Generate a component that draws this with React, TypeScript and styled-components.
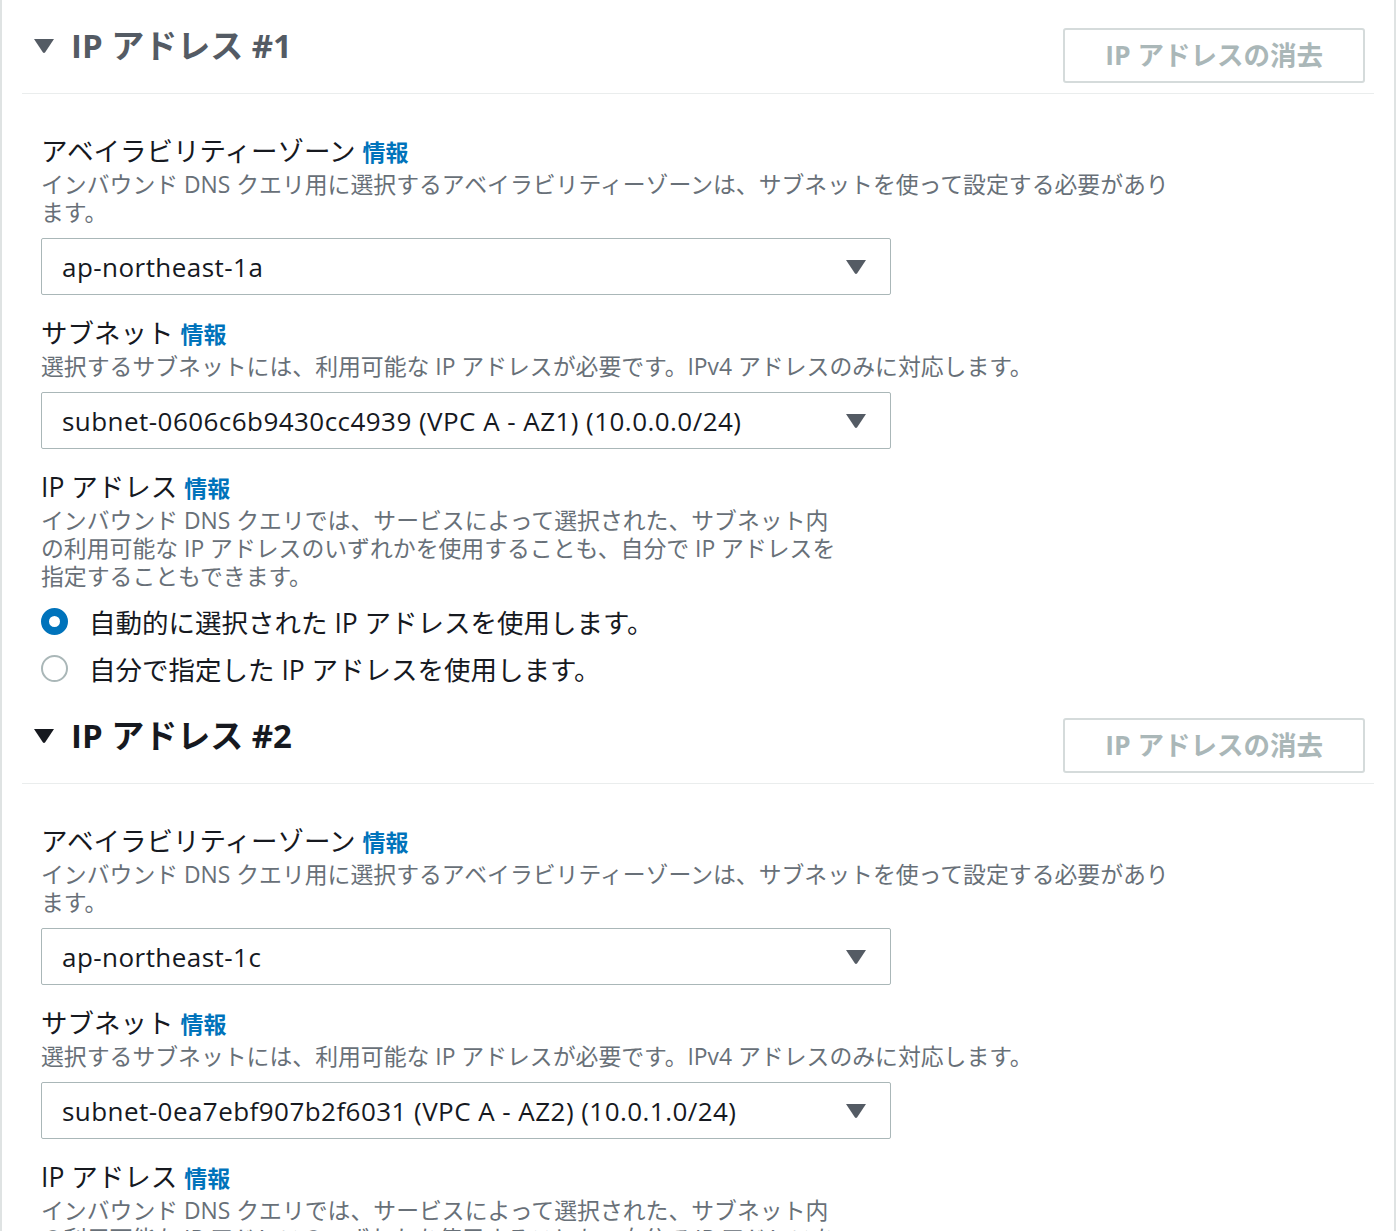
import styled, { createGlobalStyle } from "styled-components";

const GlobalStyle = createGlobalStyle`
    html, body {
        margin: 0;
        padding: 0;
        background: #ffffff;
        overflow: hidden;
    }
    body {
        font-family: "Open Sans", "Noto Sans CJK JP", sans-serif;
        color: #16191f;
    }
`;

const Page = styled.div`
    width: 1396px;
    min-height: 100vh;
    box-sizing: border-box;
    border-left: 2px solid #dfe3e3;
    border-right: 2px solid #dfe3e3;
`;

const Header = styled.div`
    margin: 0 20px;
    padding: 28px 9px 10px 12px;
    display: flex;
    align-items: flex-start;
    justify-content: space-between;
    border-bottom: 1px solid #eaeded;
`;

const Title = styled.h2<{ $muted?: boolean }>`
    margin: 0;
    display: flex;
    align-items: center;
    gap: 17px;
    height: 36px;
    font-size: 33px;
    font-weight: 700;
    line-height: 36px;
    white-space: nowrap;
    color: ${(p) => (p.$muted ? "#545b64" : "#16191f")};

    svg {
        fill: currentColor;
        flex-shrink: 0;
    }
`;

const ClearButton = styled.button`
    height: 55px;
    padding: 0 40px;
    background: #ffffff;
    border: 2px solid #d5dbdb;
    border-radius: 3px;
    font-family: inherit;
    font-size: 26.5px;
    font-weight: 700;
    line-height: 1;
    color: #aab7b8;
    cursor: default;
`;

const Body = styled.div`
    padding: 39px 0 4px 39px;
`;

const Field = styled.div`
    & + & {
        margin-top: 20px;
    }
`;

const Label = styled.div`
    display: flex;
    align-items: baseline;
    height: 36px;
    font-size: 26.5px;
    line-height: 36px;
    margin-bottom: 2px;
    color: #16191f;
`;

const Info = styled.span`
    margin-left: 7px;
    font-size: 23px;
    font-weight: 700;
    color: #0073bb;
`;

const Description = styled.div`
    font-size: 22.85px;
    line-height: 28px;
    color: #687078;
    white-space: pre-line;
`;

const Select = styled.div`
    margin-top: 11px;
    width: 850px;
    height: 57px;
    box-sizing: border-box;
    border: 1px solid #aab7b8;
    border-radius: 2px;
    padding: 0 24px 0 20px;
    display: flex;
    align-items: center;
    justify-content: space-between;
    font-size: 26px;
    letter-spacing: 0.45px;
    color: #16191f;

    svg {
        fill: #545b64;
    }
`;

const RadioGroup = styled.div`
    margin-top: 12px;
    display: flex;
    flex-direction: column;
    gap: 11px;
`;

const RadioRow = styled.label`
    display: flex;
    align-items: center;
    gap: 21px;
    height: 36px;
    font-size: 26.5px;
    color: #16191f;
`;

const RadioCircle = styled.span<{ $checked?: boolean }>`
    width: 27px;
    height: 27px;
    box-sizing: border-box;
    border-radius: 50%;
    border: ${(p) => (p.$checked ? "8.5px solid #0073bb" : "2px solid #aab7b8")};
    background: #ffffff;
    flex-shrink: 0;
`;

const Triangle = ({ w, h }: { w: number; h: number }) => (
    <svg width={w} height={h} viewBox="0 0 20 14">
        <path d="M0 0 H20 L11.2 13.2 Q10 14.6 8.8 13.2 Z" />
    </svg>
);

type Section = {
    num: number;
    muted?: boolean;
    az: string;
    subnet: string;
};

const sections: Section[] = [
    {
        num: 1,
        muted: true,
        az: "ap-northeast-1a",
        subnet: "subnet-0606c6b9430cc4939 (VPC A - AZ1) (10.0.0.0/24)",
    },
    {
        num: 2,
        az: "ap-northeast-1c",
        subnet: "subnet-0ea7ebf907b2f6031 (VPC A - AZ2) (10.0.1.0/24)",
    },
];

const IpSection = ({ s }: { s: Section }) => (
    <section>
        <Header>
            <Title $muted={s.muted}>
                <Triangle w={20} h={14} />
                IP アドレス #{s.num}
            </Title>
            <ClearButton>IP アドレスの消去</ClearButton>
        </Header>
        <Body>
            <Field>
                <Label>
                    アベイラビリティーゾーン<Info>情報</Info>
                </Label>
                <Description>
                    {"インバウンド DNS クエリ用に選択するアベイラビリティーゾーンは、サブネットを使って設定する必要があり\nます。"}
                </Description>
                <Select>
                    <span>{s.az}</span>
                    <Triangle w={20} h={14} />
                </Select>
            </Field>
            <Field>
                <Label>
                    サブネット<Info>情報</Info>
                </Label>
                <Description>
                    選択するサブネットには、利用可能な IP アドレスが必要です。IPv4 アドレスのみに対応します。
                </Description>
                <Select>
                    <span>{s.subnet}</span>
                    <Triangle w={20} h={14} />
                </Select>
            </Field>
            <Field>
                <Label>
                    IP アドレス<Info>情報</Info>
                </Label>
                <Description>
                    {"インバウンド DNS クエリでは、サービスによって選択された、サブネット内\nの利用可能な IP アドレスのいずれかを使用することも、自分で IP アドレスを\n指定することもできます。"}
                </Description>
                <RadioGroup>
                    <RadioRow>
                        <RadioCircle $checked />
                        自動的に選択された IP アドレスを使用します。
                    </RadioRow>
                    <RadioRow>
                        <RadioCircle />
                        自分で指定した IP アドレスを使用します。
                    </RadioRow>
                </RadioGroup>
            </Field>
        </Body>
    </section>
);

export default function App() {
    return (
        <>
            <GlobalStyle />
            <Page>
                {sections.map((s) => (
                    <IpSection key={s.num} s={s} />
                ))}
            </Page>
        </>
    );
}
